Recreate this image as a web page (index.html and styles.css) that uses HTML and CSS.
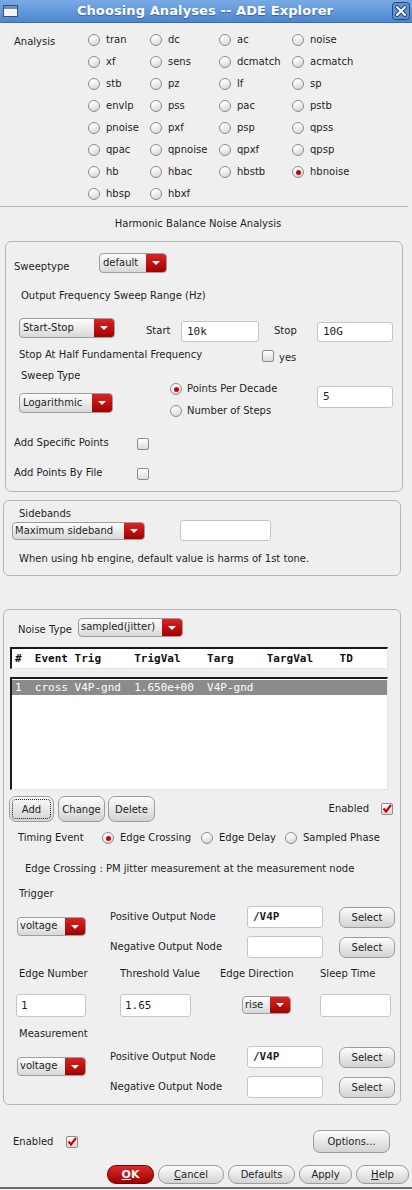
FILE: index.html
```html
<!DOCTYPE html>
<html lang="en">
<head>
    <meta charset="UTF-8">
    <title>Choosing Analyses -- ADE Explorer</title>
    <link rel="stylesheet" href="styles.css">
</head>
<body>
    <div class="titlebar">
        <svg class="winicon" width="15" height="12" viewBox="0 0 15 12">
            <rect x="0.5" y="0.5" width="14" height="11" fill="#f4f4f4" stroke="#34527a"/>
            <rect x="1" y="1" width="13" height="3" fill="#6f8fb8"/>
        </svg>
        <span class="title">Choosing Analyses -- ADE Explorer</span>
        <svg class="close" width="18" height="18" viewBox="0 0 18 18">
            <rect x="0.5" y="0.5" width="17" height="17" rx="3" fill="#5d93d4" stroke="#24466f"/>
            <path d="M5 5 L13 13 M13 5 L5 13" stroke="#24466f" stroke-width="4" stroke-linecap="round"/>
            <path d="M5 5 L13 13 M13 5 L5 13" stroke="#ffffff" stroke-width="2" stroke-linecap="round"/>
        </svg>
    </div>

    <div class="analysis">
        <div class="an-label">Analysis</div>
        <div class="an-grid">
            <label class="opt"><span class="radio"></span>tran</label>
            <label class="opt"><span class="radio"></span>dc</label>
            <label class="opt"><span class="radio"></span>ac</label>
            <label class="opt"><span class="radio"></span>noise</label>
            <label class="opt"><span class="radio"></span>xf</label>
            <label class="opt"><span class="radio"></span>sens</label>
            <label class="opt"><span class="radio"></span>dcmatch</label>
            <label class="opt"><span class="radio"></span>acmatch</label>
            <label class="opt"><span class="radio"></span>stb</label>
            <label class="opt"><span class="radio"></span>pz</label>
            <label class="opt"><span class="radio"></span>lf</label>
            <label class="opt"><span class="radio"></span>sp</label>
            <label class="opt"><span class="radio"></span>envlp</label>
            <label class="opt"><span class="radio"></span>pss</label>
            <label class="opt"><span class="radio"></span>pac</label>
            <label class="opt"><span class="radio"></span>pstb</label>
            <label class="opt"><span class="radio"></span>pnoise</label>
            <label class="opt"><span class="radio"></span>pxf</label>
            <label class="opt"><span class="radio"></span>psp</label>
            <label class="opt"><span class="radio"></span>qpss</label>
            <label class="opt"><span class="radio"></span>qpac</label>
            <label class="opt"><span class="radio"></span>qpnoise</label>
            <label class="opt"><span class="radio"></span>qpxf</label>
            <label class="opt"><span class="radio"></span>qpsp</label>
            <label class="opt"><span class="radio"></span>hb</label>
            <label class="opt"><span class="radio"></span>hbac</label>
            <label class="opt"><span class="radio"></span>hbstb</label>
            <label class="opt"><span class="radio on"></span>hbnoise</label>
            <label class="opt"><span class="radio"></span>hbsp</label>
            <label class="opt"><span class="radio"></span>hbxf</label>
        </div>
    </div>

    <div class="sep"></div>
    <div class="heading">Harmonic Balance Noise Analysis</div>

    <!-- sweep range -->
    <div class="frame frame-sweep">
        <div class="row r-sweeptype">
            <span class="lbl w-sweeptype">Sweeptype</span>
            <div class="combo c-default"><span class="val">default</span><span class="arrow"></span></div>
        </div>
        <div class="text t-range">Output Frequency Sweep Range (Hz)</div>
        <div class="row r-startstop">
            <div class="combo c-startstop"><span class="val">Start-Stop</span><span class="arrow"></span></div>
            <span class="lbl w-start">Start</span>
            <div class="field f-start">10k</div>
            <span class="lbl w-stop">Stop</span>
            <div class="field f-stop">10G</div>
        </div>
        <div class="row r-half">
            <span class="w-half">Stop At Half Fundamental Frequency</span>
            <span class="check"></span>
            <span class="yes">yes</span>
        </div>
        <div class="row r-type">
            <div class="col-type">
                <div class="type-lbl">Sweep Type</div>
                <div class="combo c-log"><span class="val">Logarithmic</span><span class="arrow"></span></div>
            </div>
            <div class="col-steps">
                <label class="opt"><span class="radio on"></span>Points Per Decade</label>
                <label class="opt"><span class="radio"></span>Number of Steps</label>
            </div>
            <div class="field f-points">5</div>
        </div>
        <div class="row r-add">
            <span class="w-add">Add Specific Points</span>
            <span class="check"></span>
        </div>
        <div class="row r-file">
            <span class="w-add">Add Points By File</span>
            <span class="check"></span>
        </div>
    </div>

    <!-- sidebands -->
    <div class="frame frame-side">
        <div class="side-lbl">Sidebands</div>
        <div class="row r-side">
            <div class="combo c-side"><span class="val">Maximum sideband</span><span class="arrow"></span></div>
            <div class="field f-side"></div>
        </div>
        <div class="text t-hint">When using hb engine, default value is harms of 1st tone.</div>
    </div>

    <!-- noise type -->
    <div class="frame frame-noise">
        <div class="row r-noise">
            <span class="w-noise">Noise Type</span>
            <div class="combo c-noise"><span class="val">sampled(jitter)</span><span class="arrow"></span></div>
        </div>
        <div class="table-head">#  Event Trig     TrigVal    Targ     TargVal    TD</div>
        <div class="table-list">
            <div class="table-row sel">1  cross V4P-gnd  1.650e+00  V4P-gnd</div>
        </div>
        <div class="row r-buttons">
            <button class="btn b-add focus">Add</button>
            <button class="btn b-change">Change</button>
            <button class="btn b-delete">Delete</button>
            <span class="enabled">Enabled</span>
            <span class="check on"><svg width="12" height="12" viewBox="0 0 12 12"><path d="M2.5 5.5 L5 8.5 L10 2" fill="none" stroke="#d40000" stroke-width="2.2"/></svg></span>
        </div>
        <div class="row r-timing">
            <span class="w-timing">Timing Event</span>
            <label class="opt g-edge"><span class="radio on"></span>Edge Crossing</label>
            <label class="opt g-delay"><span class="radio"></span>Edge Delay</label>
            <label class="opt"><span class="radio"></span>Sampled Phase</label>
        </div>
        <div class="text t-desc">Edge Crossing : PM jitter measurement at the measurement node</div>
        <div class="text t-sub">Trigger</div>
        <div class="nodes">
            <div class="combo c-volt"><span class="val">voltage</span><span class="arrow"></span></div>
            <span class="node-lbl">Positive Output Node</span>
            <div class="field f-node bold">/V4P</div>
            <button class="btn b-select">Select</button>
            <span class="node-lbl">Negative Output Node</span>
            <div class="field f-node"></div>
            <button class="btn b-select">Select</button>
        </div>
        <div class="edge-head">
            <span>Edge Number</span>
            <span>Threshold Value</span>
            <span>Edge Direction</span>
            <span>Sleep Time</span>
        </div>
        <div class="edge-vals">
            <div class="field f-edge">1</div>
            <div class="field f-edge">1.65</div>
            <div class="combo c-rise"><span class="val">rise</span><span class="arrow"></span></div>
            <div class="field f-edge"></div>
        </div>
        <div class="text t-sub t-meas">Measurement</div>
        <div class="nodes">
            <div class="combo c-volt"><span class="val">voltage</span><span class="arrow"></span></div>
            <span class="node-lbl">Positive Output Node</span>
            <div class="field f-node bold">/V4P</div>
            <button class="btn b-select">Select</button>
            <span class="node-lbl">Negative Output Node</span>
            <div class="field f-node"></div>
            <button class="btn b-select">Select</button>
        </div>
    </div>

    <div class="row r-options">
        <span class="w-enabled">Enabled</span>
        <span class="check on"><svg width="12" height="12" viewBox="0 0 12 12"><path d="M2.5 5.5 L5 8.5 L10 2" fill="none" stroke="#d40000" stroke-width="2.2"/></svg></span>
        <button class="btn b-options">Options...</button>
    </div>

    <div class="row r-dialog">
        <button class="btn b-ok"><u>O</u>K</button>
        <button class="btn b-cancel"><u>C</u>ancel</button>
        <button class="btn b-defaults">Defaults</button>
        <button class="btn b-apply">Apply</button>
        <button class="btn b-help"><u>H</u>elp</button>
    </div>
    <div class="bottom-line"></div>
</body>
</html>
```

FILE: styles.css
```css
* {
    box-sizing: border-box;
}
body {
    margin: 0;
    width: 412px;
    height: 1190px;
    overflow: hidden;
    background: #efefef;
    color: #1e1e1e;
    font-family: "DejaVu Sans", sans-serif;
    font-size: 10px;
    line-height: 14px;
}

/* title bar */
.titlebar {
    height: 23px;
    display: flex;
    align-items: center;
    background: linear-gradient(#79aae6, #4d86cf);
    border-bottom: 1px solid #3a6db0;
    padding: 0 2px 0 3px;
}
.winicon { flex: none; }
.title {
    flex: 1;
    text-align: center;
    color: #fff;
    font-weight: bold;
    font-size: 13px;
    letter-spacing: 0.1px;
    text-shadow: 0 1px 1px rgba(20, 50, 100, 0.5);
}
.close { flex: none; }

/* common widgets */
.row {
    display: flex;
    align-items: flex-start;
}
.opt {
    display: flex;
    align-items: center;
    gap: 6px;
    white-space: nowrap;
}
.radio {
    flex: none;
    position: relative;
    width: 12px;
    height: 12px;
    border-radius: 50%;
    border: 1px solid #8c8c8c;
    background: linear-gradient(160deg, #ffffff 20%, #d2d2d2);
}
.radio.on::after {
    content: "";
    position: absolute;
    left: 2.5px;
    top: 2.5px;
    width: 5px;
    height: 5px;
    border-radius: 50%;
    background: #d10000;
}
.check {
    flex: none;
    display: block;
    width: 12px;
    height: 12px;
    border: 1px solid #8c8c8c;
    border-radius: 2px;
    background: linear-gradient(#ffffff, #dcdcdc);
}
.check svg {
    display: block;
    margin: -1px 0 0 -1px;
}
.combo {
    flex: none;
    display: flex;
    height: 20px;
    border: 1px solid #9e9e9e;
    border-radius: 4px;
    overflow: hidden;
    background: linear-gradient(#fdfdfd, #d8d8d8);
}
.combo .val {
    flex: 1;
    padding-left: 3px;
    line-height: 17px;
    white-space: nowrap;
}
.combo .arrow {
    flex: none;
    width: 20px;
    display: flex;
    align-items: center;
    justify-content: center;
    background: linear-gradient(#d82424, #a30000);
}
.combo .arrow::after {
    content: "";
    border-left: 4px solid transparent;
    border-right: 4px solid transparent;
    border-top: 4px solid #fff;
}
.field {
    flex: none;
    height: 22px;
    background: #fff;
    border: 1px solid #c6c6c6;
    border-radius: 3px;
    padding-left: 5px;
    font-family: "DejaVu Sans Mono", monospace;
    font-size: 11px;
    line-height: 20px;
}
.field.bold { font-weight: bold; }
.btn {
    flex: none;
    height: 21px;
    padding: 0;
    border: 1px solid #9c9c9c;
    border-radius: 7px;
    background: linear-gradient(#fcfcfc, #d3d3d3);
    color: #1e1e1e;
    font-family: "DejaVu Sans", sans-serif;
    font-size: 10px;
    text-align: center;
}
.text { white-space: nowrap; }

/* analysis choice */
.analysis {
    display: flex;
    padding: 6px 0 0 14px;
}
.an-label {
    width: 74px;
    padding-top: 6px;
}
.an-grid {
    display: grid;
    grid-template-columns: 62px 69px 73px 90px;
    grid-auto-rows: 22px;
}
.sep {
    margin: 1px 4px 0 0;
    height: 1px;
    background: #b9b9b9;
}
.heading {
    margin-top: 10px;
    text-align: center;
    padding-right: 16px;
}

/* frames */
.frame {
    border: 1px solid #b6b6b6;
    border-radius: 6px;
}
.frame-sweep {
    margin: 10px 9px 0 5px;
    padding-bottom: 11px;
}
.frame-side {
    margin: 8px 11px 0 3px;
    padding-bottom: 9px;
}
.frame-noise {
    margin: 33px 11px 0 3px;
    padding-bottom: 6px;
}

/* sweep frame */
.r-sweeptype { margin: 11px 0 0 8px; height: 20px; }
.w-sweeptype { width: 85px; margin-top: 7px; }
.c-default { width: 68px; }
.t-range { margin: 16px 0 0 15px; }
.r-startstop { margin: 15px 0 0 13px; height: 24px; }
.c-startstop { width: 96px; }
.w-start { width: 35px; margin: 6px 0 0 31px; }
.f-start { width: 78px; height: 21px; margin-top: 3px; }
.w-stop { width: 43px; margin: 6px 0 0 15px; }
.f-stop { width: 76px; height: 20px; margin-top: 4px; line-height: 18px; }
.r-half { margin: 6px 0 0 13px; height: 14px; }
.w-half { width: 243px; }
.r-half .check { margin-top: 2px; }
.yes { margin: 3px 0 0 5px; }
.r-type { margin: 7px 0 0 13px; height: 53px; }
.col-type { width: 94px; }
.type-lbl { padding-left: 2px; }
.c-log { margin-top: 10px; }
.col-steps {
    width: 147px;
    margin: 9px 0 0 57px;
    display: grid;
    grid-auto-rows: 22px;
}
.col-steps .opt { gap: 5px; }
.f-points { width: 76px; margin-top: 17px; }
.r-add { margin: 14px 0 0 8px; height: 14px; }
.r-file { margin: 16px 0 0 8px; height: 14px; }
.w-add { width: 123px; }
.r-add .check, .r-file .check { margin-top: 2px; }

/* sidebands frame */
.side-lbl { margin: 7px 0 0 15px; line-height: 12px; }
.r-side { margin-left: 8px; height: 21px; }
.c-side { width: 133px; height: 18px; margin-top: 2px; }
.c-side .val { line-height: 15px; padding-left: 2px; }
.f-side { width: 91px; height: 21px; margin-left: 35px; }
.t-hint { margin: 11px 0 0 15px; }

/* noise frame */
.r-noise { margin: 7px 0 0 14px; height: 20px; align-items: flex-end; }
.w-noise { width: 60px; }
.c-noise { width: 105px; height: 19px; }
.c-noise .val { line-height: 16px; padding-left: 2px; }
.table-head,
.table-list {
    margin-left: 6px;
    width: 378px;
    background: #fff;
    border-top: 2px solid #1b1b1b;
    border-left: 2px solid #1b1b1b;
    border-right: 1px solid #e4e4e4;
    border-bottom: 1px solid #e4e4e4;
    font-family: "DejaVu Sans Mono", monospace;
    font-size: 11px;
}
.table-head {
    margin-top: 10px;
    height: 22px;
    padding-left: 3px;
    line-height: 19px;
    font-weight: bold;
    color: #111;
    white-space: pre;
}
.table-list {
    margin-top: 8px;
    height: 113px;
    padding-top: 1px;
}
.table-row {
    height: 15px;
    line-height: 15px;
    padding-left: 3px;
    white-space: pre;
}
.table-row.sel {
    background: #8b8b8b;
    color: #fff;
}
.r-buttons { margin: 6px 0 0 5px; height: 26px; align-items: center; }
.r-buttons .btn { height: 26px; }
.b-add { width: 45px; }
.b-change { width: 47px; margin-left: 4px; }
.b-delete { width: 47px; margin-left: 3px; }
.btn.focus { outline: 1px dotted #222; outline-offset: -4px; }
.enabled { margin-left: auto; margin-right: 12px; }
.r-buttons .check { margin-right: 7px; }
.r-timing { margin: 9px 0 0 14px; height: 14px; align-items: center; }
.w-timing { width: 84px; }
.g-edge { width: 99px; }
.g-delay { width: 84px; }
.t-desc { margin: 17px 0 0 21px; }
.t-sub { margin: 11px 0 0 15px; }
.t-meas { margin-top: 10px; }
.nodes {
    margin: 5px 0 0 13px;
    display: grid;
    grid-template-columns: 93px 137px 92px 56px;
    grid-template-rows: 30px 22px;
}
.nodes .c-volt {
    grid-row: 1 / 3;
    width: 69px;
    height: 19px;
    margin-top: 11px;
}
.c-volt .val { line-height: 16px; padding-left: 2px; }
.node-lbl { margin-top: 4px; }
.f-node { width: 76px; }
.b-select { width: 56px; margin-top: 1px; }
.edge-head {
    margin: 9px 0 0 15px;
    display: grid;
    grid-template-columns: 101px 100px 100px auto;
}
.edge-vals {
    margin: 13px 0 0 12px;
    display: grid;
    grid-template-columns: 104px 122px 78px 71px;
    height: 23px;
}
.f-edge { width: 70px; height: 23px; line-height: 21px; padding-left: 4px; }
.edge-vals .f-edge:nth-child(2) { width: 71px; }
.edge-vals .f-edge:last-child { width: 71px; }
.c-rise { width: 49px; height: 18px; margin-top: 2px; }
.c-rise .val { line-height: 15px; padding-left: 2px; }

/* footer */
.r-options { margin: 25px 0 0 13px; height: 23px; align-items: center; }
.w-enabled { width: 53px; }
.r-options .check { margin-top: 1px; }
.b-options { width: 77px; height: 23px; margin: 0 22px 0 auto; }
.r-dialog {
    margin: 12px 3px 0 0;
    justify-content: flex-end;
    gap: 4px;
}
.r-dialog .btn { height: 19px; border-radius: 9px; }
.b-ok {
    width: 47px;
    background: linear-gradient(#dc2a2a, #a00000);
    border-color: #7c0000;
    color: #fff;
    font-weight: bold;
    font-size: 11px;
}
.b-cancel { width: 66px; }
.b-defaults { width: 67px; }
.b-apply { width: 53px; }
.b-help { width: 53px; }
.bottom-line {
    margin-top: 3px;
    height: 2px;
    background: #6b6b6b;
}
```
